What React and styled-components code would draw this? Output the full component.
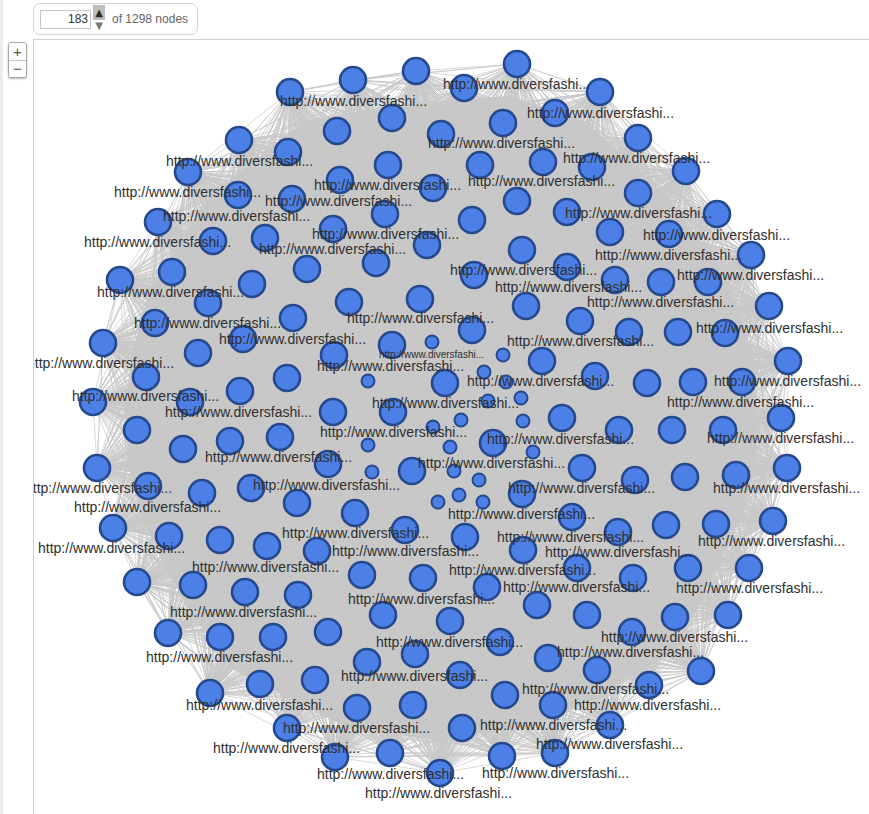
import React, { useMemo } from "react";
import styled, { createGlobalStyle } from "styled-components";

const GlobalStyle = createGlobalStyle`
  html, body { margin: 0; padding: 0; background: #fff; }
  body { font-family: "Liberation Sans", Arial, sans-serif; }
`;

const BIG = `290,92 239,140 288,152 188,172 337,131 238,195 292,199 158,222 213,241 265,238 340,180 333,229 120,280 172,272 252,284 307,269 208,303 293,318 353,80 416,71 517,64 464,88 600,92 392,118 441,134 503,123 555,113 388,165 480,165 543,162 592,167 433,188 517,201 567,212 385,214 472,220 427,245 522,250 610,232 376,263 474,275 567,267 349,302 420,299 526,306 638,138 686,171 638,193 717,214 669,234 751,255 615,280 661,282 708,282 769,306
155,323 103,343 198,353 243,339 146,377 287,378 240,391 93,402 190,402 137,430 183,449 230,441 280,437 97,468 148,486 202,493 251,488 297,503 113,528 169,536 220,540 267,546 317,551
580,321 472,330 392,345 334,355 542,361 445,383 595,376 333,412 393,412 562,418 493,443 328,464 412,471 582,468 522,494 355,513 405,530 465,537 572,517 523,550
629,332 678,332 725,333 788,361 647,383 693,382 742,382 781,418 619,430 672,430 723,430 635,480 685,477 736,475 787,468 618,532 666,525 716,524 773,521
137,582 193,585 245,592 298,595 168,633 220,637 273,637 328,632 210,693 260,684 315,680 287,728
362,575 423,578 487,587 537,605 587,615 383,615 450,621 500,642 415,654 367,662 548,658 597,670 460,675 505,695 357,708 413,705 553,705 462,728 610,725 335,757 390,753 440,773 502,756 555,753 577,568
633,578 688,568 749,568 632,632 675,617 728,615 649,685 701,671`;

const SMALL = `432,342 503,355 368,381 484,372 506,382 488,401 521,398 461,420 523,421 433,427 368,445 450,447 533,452 372,472 454,471 479,480 438,502 459,495 483,502`;

const LABELS = `443,84 280,101 527,113 166,161 428,143 563,158 114,192 314,185 468,181 265,201 163,216 565,213 84,242 259,249 312,234 643,235 595,255 450,270 677,275 495,287 97,292 587,302 134,323 219,339 27,363 72,396 165,412 205,457 25,488 74,507 253,485 282,533 38,548 347,318 507,341 317,366 467,381 372,403 320,432 487,439 418,463 508,488 448,514 497,537 332,551 545,552 696,328 714,381 667,402 707,438 713,488 698,541 192,567 170,612 146,657 186,705 283,728 213,748 317,774 449,570 503,587 348,599 376,642 557,652 341,676 522,689 574,705 480,725 536,744 482,773 365,793 676,588 601,637`;

const parse = (s) =>
  s
    .trim()
    .split(/\s+/)
    .map((p) => p.split(",").map(Number));

const bigNodes = parse(BIG);
const smallNodes = parse(SMALL);
const labels = parse(LABELS);

function mulberry32(a) {
  return function () {
    a |= 0;
    a = (a + 0x6d2b79f5) | 0;
    let t = Math.imul(a ^ (a >>> 15), 1 | a);
    t = (t + Math.imul(t ^ (t >>> 7), 61 | t)) ^ t;
    return ((t ^ (t >>> 14)) >>> 0) / 4294967296;
  };
}

function convexHull(points) {
  const pts = [...points].sort((a, b) => a[0] - b[0] || a[1] - b[1]);
  const cross = (o, a, b) => (a[0] - o[0]) * (b[1] - o[1]) - (a[1] - o[1]) * (b[0] - o[0]);
  const lower = [];
  for (const p of pts) {
    while (lower.length >= 2 && cross(lower[lower.length - 2], lower[lower.length - 1], p) <= 0) lower.pop();
    lower.push(p);
  }
  const upper = [];
  for (let i = pts.length - 1; i >= 0; i--) {
    const p = pts[i];
    while (upper.length >= 2 && cross(upper[upper.length - 2], upper[upper.length - 1], p) <= 0) upper.pop();
    upper.push(p);
  }
  upper.pop();
  lower.pop();
  return lower.concat(upper);
}

const LABEL_TEXT = "http://www.diversfashi...";

const Page = styled.div`
  display: flex;
  width: 869px;
  height: 814px;
  overflow: hidden;
  background: #fff;
`;

const Rail = styled.aside`
  width: 33px;
  flex: none;
  display: flex;
`;

const Grip = styled.div`
  width: 3px;
  flex: none;
  background: #ececec;
`;

const RailBody = styled.div`
  flex: 1;
  padding: 42px 0 0 5px;
`;

const ZoomControl = styled.div`
  width: 17px;
  display: flex;
  flex-direction: column;
  border: 1px solid #a9a9a9;
  border-radius: 3px;
  box-shadow: 0 1px 2px rgba(0, 0, 0, 0.28);
  background: #fdfdfd;
  overflow: hidden;
`;

const ZoomButton = styled.button`
  height: 17px;
  border: 0;
  padding: 0;
  margin: 0;
  background: #fdfdfd;
  font: 15px/16px "Liberation Sans", Arial, sans-serif;
  color: #5a5a5a;
  cursor: pointer;
  & + & {
    border-top: 1px solid #c4c4c4;
  }
`;

const Main = styled.div`
  flex: 1;
  min-width: 0;
  display: flex;
  flex-direction: column;
`;

const Toolbar = styled.div`
  height: 39px;
  flex: none;
  box-sizing: border-box;
  padding-top: 3px;
`;

const Counter = styled.div`
  display: inline-flex;
  align-items: center;
  box-sizing: border-box;
  width: 165px;
  height: 32px;
  padding-left: 6px;
  border: 1px solid #d3d3d3;
  border-radius: 7px;
  background: #fff;
`;

const NumberField = styled.div`
  box-sizing: border-box;
  width: 51px;
  height: 19px;
  padding-right: 2px;
  border: 1px solid #c6c6c6;
  font: 12px/17px "Liberation Sans", Arial, sans-serif;
  color: #333;
  text-align: right;
`;

const Spinner = styled.div`
  display: flex;
  flex-direction: column;
  width: 12px;
  margin-left: 2px;
  margin-top: -2px;
`;

const SpinPart = styled.span`
  display: flex;
  align-items: center;
  justify-content: center;
  height: ${(p) => (p.$up ? "15px" : "11px")};
  background: ${(p) => (p.$up ? "#bdbdbd" : "transparent")};
  color: ${(p) => (p.$up ? "#2b2b2b" : "#7a7a7a")};
  font: 10px/1 "DejaVu Sans", sans-serif;
`;

const CountText = styled.span`
  margin-left: 7px;
  font: 12px "Liberation Sans", Arial, sans-serif;
  color: #666;
`;

const Canvas = styled.div`
  flex: 1;
  overflow: hidden;
  border-top: 1px solid #d0d0d0;
  border-left: 1px solid #d0d0d0;
`;

const GraphSvg = styled.svg`
  display: block;
`;

const Label = styled.text`
  font-family: "Liberation Sans", Arial, sans-serif;
  font-size: ${(p) => (p.$small ? "10px" : "14px")};
  fill: #2f2f2f;
`;

function Graph() {
  const { edgePath, corePoints } = useMemo(() => {
    const all = [...bigNodes, ...smallNodes];
    const rnd = mulberry32(1298);
    const n = all.length;
    const parts = [];
    for (let i = 0; i < n; i++) {
      for (let k = 0; k < 80; k++) {
        const j = Math.floor(rnd() * n);
        if (j === i) continue;
        const [x1, y1] = all[i];
        const [x2, y2] = all[j];
        parts.push(`M${x1} ${y1}L${x2} ${y2}`);
      }
    }
    const hull = convexHull(all);
    const cx = all.reduce((s, p) => s + p[0], 0) / n;
    const cy = all.reduce((s, p) => s + p[1], 0) / n;
    const core = hull
      .map(([x, y]) => `${(cx + (x - cx) * 0.91).toFixed(1)},${(cy + (y - cy) * 0.91).toFixed(1)}`)
      .join(" ");
    return { edgePath: parts.join(""), corePoints: core };
  }, []);

  return (
    <GraphSvg width="835" height="774" viewBox="34 40 835 774">
      <polygon points={corePoints} fill="#c9c9c9" />
      <path d={edgePath} stroke="#c9c9c9" strokeWidth="0.7" fill="none" />
      {bigNodes.map(([x, y], i) => (
        <circle key={`b${i}`} cx={x} cy={y} r="13" fill="#4c80e6" stroke="#26488c" strokeWidth="2.6" />
      ))}
      {smallNodes.map(([x, y], i) => (
        <circle key={`s${i}`} cx={x} cy={y} r="6.5" fill="#4c80e6" stroke="#26488c" strokeWidth="2" />
      ))}
      {labels.map(([x, y], i) => (
        <Label key={`l${i}`} x={x} y={y + 5}>
          {LABEL_TEXT}
        </Label>
      ))}
      <Label $small x={379} y={357.5}>
        {LABEL_TEXT}
      </Label>
    </GraphSvg>
  );
}

export default function App() {
  return (
    <>
      <GlobalStyle />
      <Page>
        <Rail>
          <Grip />
          <RailBody>
            <ZoomControl>
              <ZoomButton aria-label="zoom in">+</ZoomButton>
              <ZoomButton aria-label="zoom out">−</ZoomButton>
            </ZoomControl>
          </RailBody>
        </Rail>
        <Main>
          <Toolbar>
            <Counter>
              <NumberField>183</NumberField>
              <Spinner>
                <SpinPart $up>▲</SpinPart>
                <SpinPart>▼</SpinPart>
              </Spinner>
              <CountText>of 1298 nodes</CountText>
            </Counter>
          </Toolbar>
          <Canvas>
            <Graph />
          </Canvas>
        </Main>
      </Page>
    </>
  );
}
